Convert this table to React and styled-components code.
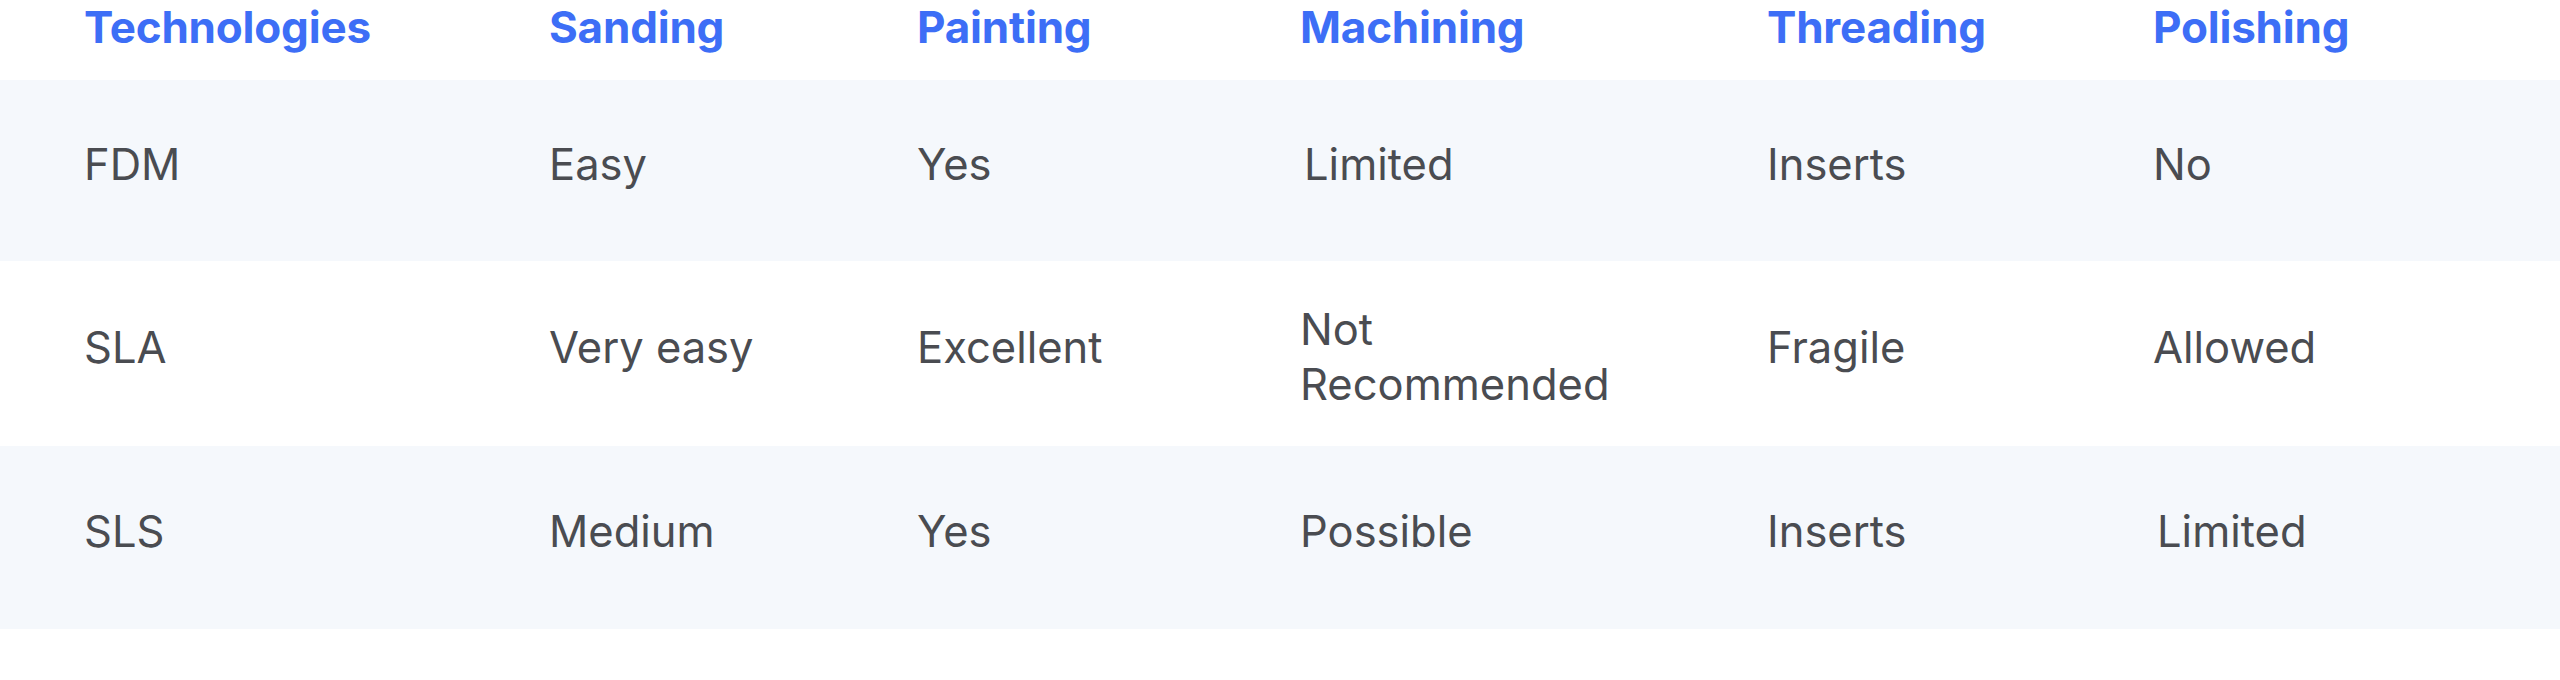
import React from 'react';
import styled, { createGlobalStyle } from 'styled-components';

const GlobalStyle = createGlobalStyle`
  html, body {
    margin: 0;
    padding: 0;
    background: #ffffff;
  }
  body {
    font-family: Inter, "Noto Sans", "Liberation Sans", sans-serif;
  }
`;

const Table = styled.div`
  width: 2560px;
  display: flex;
  flex-direction: column;
`;

const Row = styled.div`
  display: grid;
  grid-template-columns: 465px 368px 383px 467px 386px 1fr;
  align-items: ${(p) => (p.$head ? 'start' : 'center')};
  padding-left: 84px;
  min-height: ${(p) => (p.$head ? '80px' : `${p.$height || 182}px`)};
  box-sizing: border-box;
  background: ${(p) => (p.$striped ? '#f5f8fc' : '#ffffff')};
`;

const HeadCell = styled.div`
  font-size: 44px;
  line-height: 55px;
  font-weight: 700;
  color: #3d6ef6;
  letter-spacing: -0.2px;
`;

const Cell = styled.div`
  font-size: 43.5px;
  line-height: 55px;
  font-weight: 400;
  color: #4a4c51;
  padding-right: 90px;
  padding-bottom: ${(p) => (p.$multi ? '0' : '13px')};
  padding-top: ${(p) => (p.$multi ? '6px' : '0')};
  padding-left: ${(p) => (p.$nudge ? '4px' : '0')};
`;

const headers = ['Technologies', 'Sanding', 'Painting', 'Machining', 'Threading', 'Polishing'];

const rows = [
  { height: 181, cells: ['FDM', 'Easy', 'Yes', { text: 'Limited', nudge: true }, 'Inserts', 'No'] },
  { height: 185, cells: ['SLA', 'Very easy', 'Excellent', { text: 'Not Recommended', multi: true }, 'Fragile', 'Allowed'] },
  { height: 183, cells: ['SLS', 'Medium', 'Yes', 'Possible', 'Inserts', { text: 'Limited', nudge: true }] },
];

const App = () => {
  return (
    <>
      <GlobalStyle />
      <Table>
        <Row $head>
          {headers.map((h) => (
            <HeadCell key={h}>{h}</HeadCell>
          ))}
        </Row>
        {rows.map((row, i) => (
          <Row key={i} $striped={i % 2 === 0} $height={row.height}>
            {row.cells.map((c, j) => {
              const cell = typeof c === 'string' ? { text: c } : c;
              return (
                <Cell key={j} $multi={cell.multi} $nudge={cell.nudge}>
                  {cell.text}
                </Cell>
              );
            })}
          </Row>
        ))}
      </Table>
    </>
  );
};

export default App;
